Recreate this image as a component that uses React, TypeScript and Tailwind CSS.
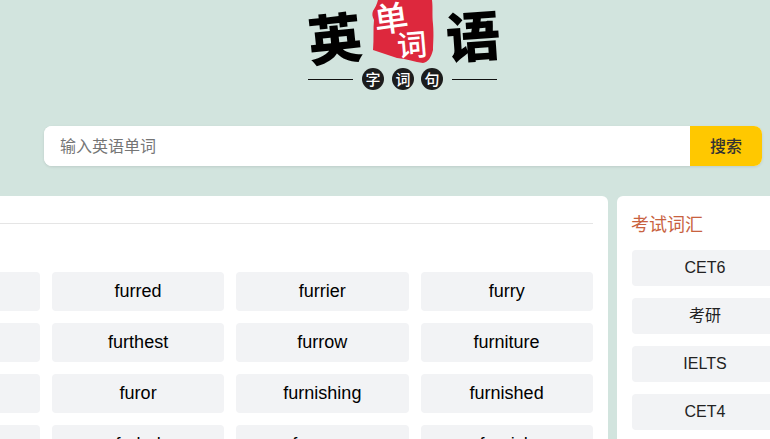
const rows = [
  ["furore", "furred", "furrier", "furry"],
  ["further", "furthest", "furrow", "furniture"],
  ["furnish", "furor", "furnishing", "furnished"],
  ["furious", "furled", "furnace", "furnish"],
];
const exams = ["CET6", "考研", "IELTS", "CET4"];
const cjk = "'Noto Sans CJK SC', sans-serif";

function Logo() {
  return (
    <svg width="200" height="92" viewBox="0 0 200 92" className="block mx-auto">
      <path
        d="M75 0 L129 0 C130 8 129 14 130 24 C131 36 130 44 130 50 C128 58 125 62 120 63 C112 62 104 59 94 58 C86 55 78 53 70 50 C71 38 70 28 71 20 C69 16 69 14 70 11 C72 8 74 4 75 0 Z"
        fill="#dd283d"
      />
      <g fontFamily={cjk} fontWeight="900" textAnchor="middle">
        <text x="32" y="59" fontSize="54" fill="#000" transform="rotate(-6 32 40)">英</text>
        <text x="170" y="57" fontSize="54" fill="#000" transform="rotate(-4 170 38)">语</text>
        <text x="88" y="31" fontSize="34" fill="#fff" fontWeight="500" transform="rotate(-8 88 18)">单</text>
        <text x="109" y="56" fontSize="30" fill="#fff" fontWeight="500" transform="rotate(-5 109 44)">词</text>
      </g>
      <rect x="5" y="79" width="45" height="1" fill="#111" />
      <rect x="149" y="79" width="45" height="1" fill="#111" />
      <circle cx="70" cy="79" r="11" fill="#1c1c1c" />
      <circle cx="100" cy="79" r="11" fill="#1c1c1c" />
      <circle cx="129" cy="79" r="11" fill="#1c1c1c" />
      <g fontFamily={cjk} fontWeight="500" fontSize="15" fill="#fff" textAnchor="middle">
        <text x="70" y="84.5">字</text>
        <text x="100" y="84.5">词</text>
        <text x="129" y="84.5">句</text>
      </g>
    </svg>
  );
}

export default function App() {
  return (
    <div className="w-[770px] h-[439px] overflow-hidden bg-[#d2e4de] font-['Liberation_Sans','Noto_Sans_CJK_SC',sans-serif]">
      <header className="h-[196px] pl-[44px] pr-2">
        <Logo />
        <div className="mt-[34px] flex h-10 rounded-lg bg-white shadow-[0_1px_3px_rgba(0,0,0,0.1)] overflow-hidden">
          <input
            placeholder="输入英语单词"
            className="flex-1 min-w-0 pl-4 pb-[2px] text-base outline-none bg-white text-black placeholder:text-[#757575] font-['Noto_Sans_CJK_SC',sans-serif]"
          />
          <button className="w-[72px] pb-[2px] bg-[#ffc800] text-base font-medium text-[#333] font-['Noto_Sans_CJK_SC',sans-serif]">搜索</button>
        </div>
      </header>
      <main className="flex gap-[9.25px] -ml-[147.25px] w-[940px] h-[243px] items-stretch">
        <section className="w-[755px] shrink-0 h-[300px] rounded-t-md bg-white px-[15px]">
          <div className="h-[28px] border-b border-[#e5e5e5]" />
          <div className="mt-[48px] grid grid-cols-4 gap-3">
            {rows.flat().map((w, i) => (
              <div key={i} className="h-[39px] rounded bg-[#f2f3f5] flex items-center justify-center text-[18px] text-black">
                {w}
              </div>
            ))}
          </div>
        </section>
        <aside className="w-[176px] shrink-0 h-[300px] rounded-t-md bg-white px-[15px]">
          <h2 className="pt-[13px] pb-[13px] -ml-px text-[18px] leading-[28px] font-normal text-[#c8623f] font-['Noto_Sans_CJK_SC',sans-serif]">考试词汇</h2>
          <div className="flex flex-col gap-3">
            {exams.map((e) => (
              <div key={e} className="h-9 rounded bg-[#f2f3f5] flex items-center justify-center text-base text-[#222] pb-[1px]">
                {e}
              </div>
            ))}
          </div>
        </aside>
      </main>
    </div>
  );
}
